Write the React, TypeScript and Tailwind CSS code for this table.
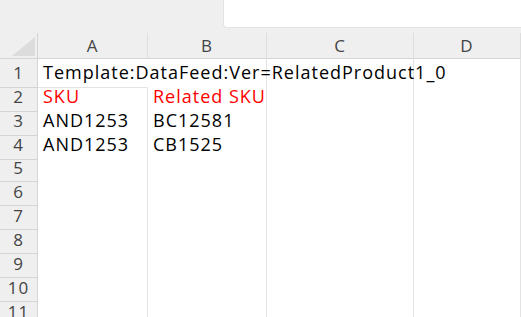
import React from "react";

const columns = ["A", "B", "C", "D"];

type Cell = { text: string; red?: boolean };

const rows: Cell[][] = [
  [{ text: "Template:DataFeed:Ver=RelatedProduct1_0" }],
  [{ text: "SKU", red: true }, { text: "Related SKU", red: true }],
  [{ text: "AND1253" }, { text: "BC12581" }],
  [{ text: "AND1253" }, { text: "CB1525" }],
  [],
  [],
  [],
  [],
  [],
  [],
  [],
];

const gridCols = "grid grid-cols-[38px_110px_119px_147px_1fr]";

const App: React.FC = () => {
  return (
    <div
      className="w-[521px] h-[317px] overflow-hidden bg-[#efefef]"
      style={{ fontFamily: '"Open Sans", "Noto Sans", sans-serif' }}
    >
      {/* ribbon strip */}
      <div className="h-[33px] flex justify-end">
        <div className="w-[298px] h-[28px] bg-white rounded-bl-[4px] border-l border-b border-[#e3e3e3]" />
      </div>

      {/* column headers */}
      <div className={`${gridCols} h-[26px] border-b border-[#d4d4d4]`}>
        <div className="relative border-r border-[#d4d4d4]">
          <svg className="absolute right-[2px] bottom-[3px]" width="23" height="19" viewBox="0 0 23 19">
            <polygon points="23,0 23,19 0,19" fill="#dcdcdc" />
          </svg>
        </div>
        {columns.map((c) => (
          <div
            key={c}
            className="flex items-center justify-center border-r border-[#dedede] text-[17px] tracking-[1px] text-[#444]"
          >
            {c}
          </div>
        ))}
      </div>

      {/* rows */}
      {rows.map((cells, i) => (
        <div key={i} className={`${gridCols} h-[24px]`}>
          <div className="flex items-center justify-center border-r border-b border-[#d4d4d4] text-[17px] tracking-[1px] text-[#444]">
            {i + 1}
          </div>
          {columns.map((c, j) => {
            const cell = cells[j];
            return (
              <div
                key={c}
                className={`flex items-center bg-white pl-[5px] pb-[1px] whitespace-nowrap overflow-visible border-r border-b border-[#e3e3e3] text-[18px] tracking-[1px] ${
                  cell?.red ? "text-[#ff0000]" : "text-black"
                } ${i === 0 && j === 0 ? "relative z-10 border-r-white" : ""}`}
              >
                {cell?.text}
              </div>
            );
          })}
        </div>
      ))}
    </div>
  );
};

export default App;
